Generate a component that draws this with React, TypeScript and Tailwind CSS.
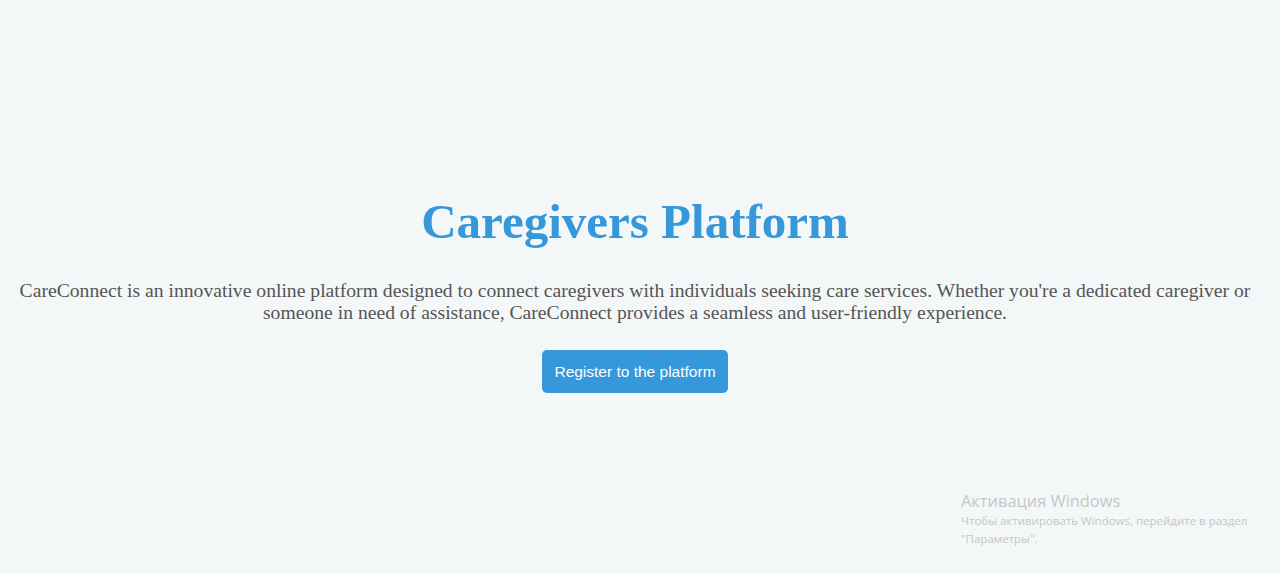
import React from "react";

export default function App() {
  return (
    <div className="relative w-full h-[574px] bg-[#f4f7f7] overflow-hidden" style={{ fontFamily: '"Liberation Serif", "Times New Roman", serif' }}>
      <div className="w-[1270px] flex flex-col items-center pt-[193px] px-[16px] text-center">
        <h1 className="text-[49px] leading-[58px] font-bold text-[#3498db]">Caregivers Platform</h1>
        <p className="mt-[28px] text-[19.65px] leading-[22px] text-[#555555]">
          CareConnect is an innovative online platform designed to connect caregivers with individuals seeking care services. Whether you're a dedicated caregiver or someone in need of assistance, CareConnect provides a seamless and user-friendly experience.
        </p>
        <button className="mt-[27px] h-[43px] px-[12px] rounded-[5px] bg-[#3498db] text-white text-[15.5px]" style={{ fontFamily: '"Liberation Sans", Arial, sans-serif' }}>
          Register to the platform
        </button>
      </div>
      <div className="absolute left-[961px] top-[491px] text-[#c3c7c7]" style={{ fontFamily: '"Open Sans", "Noto Sans", sans-serif' }}>
        <div className="text-[16.4px] leading-[20px]">Активация Windows</div>
        <div className="text-[11.5px] leading-[18px] mt-[1px]">Чтобы активировать Windows, перейдите в раздел</div>
        <div className="text-[11.5px] leading-[18px]">"Параметры".</div>
      </div>
    </div>
  );
}
